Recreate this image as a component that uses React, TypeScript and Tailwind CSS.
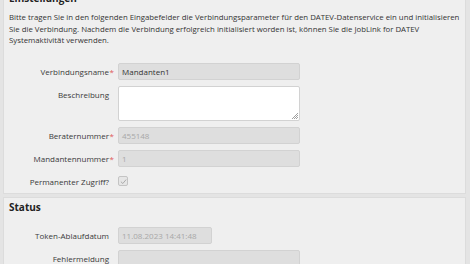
import React from 'react';

const font = { fontFamily: '"Open Sans", "Liberation Sans", sans-serif' };

const Label: React.FC<{ text: string; required?: boolean }> = ({ text, required }) => (
  <div className="relative w-[105px] text-right text-[8px] leading-[17px] text-[#3a3a3a]">
    {text}
    {required && <span className="absolute -right-[5px] top-0 text-[#e05a5a]">*</span>}
  </div>
);

const Field: React.FC<{ value?: string; muted?: boolean; narrow?: boolean }> = ({ value, muted, narrow }) => (
  <div
    className={`h-[17px] rounded-[2px] border border-[#d2d2d2] bg-[#dedede] px-[3px] text-[8px] leading-[15px] ${
      narrow ? 'w-[94px]' : 'w-[182px]'
    } ${muted ? 'text-[#a8a8a8]' : 'text-[#333]'}`}
  >
    {value}
  </div>
);

export default function App() {
  return (
    <div className="h-[264px] w-[470px] overflow-hidden bg-[#e4e4e4] pl-[3px] pr-[4px]" style={font}>
      {/* Einstellungen */}
      <div className="-mt-[10px] border border-[#dcdcdc] bg-[#efefef] pb-[3px]">
        <h2 className="pl-[5px] text-[10px] font-bold leading-[14px] text-[#222]">Einstellungen</h2>
        <p className="mt-[7px] pl-[5px] pr-[4px] text-[7.8px] leading-[11.5px] text-[#333]">
          Bitte tragen Sie in den folgenden Eingabefelder die Verbindungsparameter für den DATEV-Datenservice ein und initialisieren
          <br />
          Sie die Verbindung. Nachdem die Verbindung erfolgreich initialisiert worden ist, können Sie die JobLink for DATEV
          <br />
          Systemaktivität verwenden.
        </p>

        <div className="mt-[16px] flex flex-col gap-[6px]">
          <div className="flex gap-[9px]">
            <Label text="Verbindungsname" required />
            <Field value="Mandanten1" />
          </div>
          <div className="flex gap-[9px]">
            <Label text="Beschreibung" />
            <div className="relative h-[35px] w-[182px] rounded-[2px] border border-[#d2d2d2] bg-white">
              <svg className="absolute bottom-[1px] right-[1px]" width="7" height="7" viewBox="0 0 7 7">
                <path d="M1 7 L7 1 M3 7 L7 3 M5 7 L7 5" stroke="#888" strokeWidth="0.8" />
              </svg>
            </div>
          </div>
          <div className="flex gap-[9px]">
            <Label text="Beraternummer" required />
            <Field value="455148" muted />
          </div>
          <div className="flex gap-[9px]">
            <Label text="Mandantennummer" required />
            <Field value="1" muted />
          </div>
          <div className="flex items-center gap-[9px]">
            <Label text="Permanenter Zugriff?" />
            <div className="flex h-[10px] w-[10px] items-center justify-center rounded-[2px] border border-[#c4c4c4] bg-[#e6e6e6]">
              <svg width="7" height="7" viewBox="0 0 8 8">
                <path d="M1 4.2 L3.2 6.3 L7 1.8" fill="none" stroke="#a8a8a8" strokeWidth="1.1" />
              </svg>
            </div>
          </div>
        </div>
      </div>

      {/* Status */}
      <div className="mt-[3px] border border-[#dcdcdc] bg-[#efefef] pb-[8px]">
        <h2 className="mt-[2px] pl-[5px] text-[10px] font-bold leading-[14px] text-[#222]">Status</h2>
        <div className="mt-[13px] flex flex-col gap-[6px]">
          <div className="flex gap-[9px]">
            <Label text="Token-Ablaufdatum" />
            <Field value="11.08.2023 14:41:48" muted narrow />
          </div>
          <div className="flex gap-[9px]">
            <Label text="Fehlermeldung" />
            <Field />
          </div>
        </div>
      </div>
    </div>
  );
}
